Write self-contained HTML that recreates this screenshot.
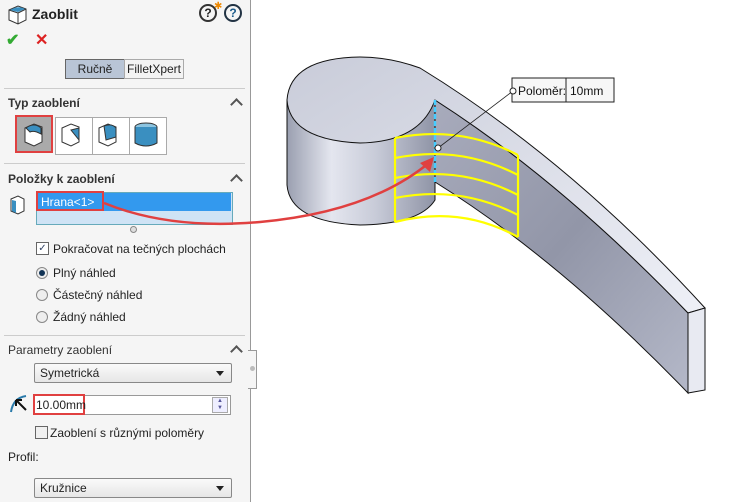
<!DOCTYPE html><html><head><meta charset="utf-8"><style>
body{margin:0;width:750px;height:502px;background:#fff;position:relative;overflow:hidden;font-family:"Liberation Sans",sans-serif;font-size:12px;color:#222}
.a{position:absolute}
#p{left:0;top:0;width:250px;height:502px;background:#f5f5f5;border-right:1px solid #999}
.sep{position:absolute;left:4px;width:241px;height:1px;background:#ccc}
.h{position:absolute;left:8px;font-size:12px;font-weight:bold;color:#333}
.car{position:absolute;left:232px;width:7px;height:7px;border-left:2px solid #555;border-top:2px solid #555;transform:rotate(45deg)}
.rb{position:absolute;left:36px;width:10px;height:10px;border:1px solid #888;border-radius:50%;background:#eee}
.dd{position:absolute;left:34px;width:196px;height:18px;border:1px solid #888;border-radius:2px;background:linear-gradient(#fafafa,#e6e6e6)}
.dd span{position:absolute;left:5px;top:2px}
.dd i{position:absolute;right:7px;top:7px;border:4px solid transparent;border-top:5px solid #222}
</style></head><body>
<div id="p" class="a"></div>
<div class="a" style="left:248px;top:350px;width:8px;height:37px;border:1px solid #999;border-left:none;background:#f5f5f5"></div>
<div class="a" style="left:250px;top:366px;width:5px;height:5px;border-radius:50%;background:#bbb"></div>
<svg class="a" style="left:6px;top:2px" width="24" height="24"><path d="M3 8 L12 4 L20 7 L20 18 L12 22 L3 18Z" fill="#fff" stroke="#333"/><path d="M3 8 L12 11 L12 22 M12 11 L20 7" fill="none" stroke="#333"/><path d="M4 8 Q12 3 19 7 L12 10Z" fill="#3a8fc0"/></svg>
<div class="a" style="left:32px;top:6px;font-size:14px;font-weight:bold">Zaoblit</div>
<div class="a" style="left:199px;top:4px;width:14px;height:14px;border:2px solid #333;border-radius:50%;font-weight:bold;text-align:center;line-height:14px;font-size:12px">?</div>
<div class="a" style="left:214px;top:1px;color:#e80;font-size:10px">✱</div>
<div class="a" style="left:224px;top:4px;width:14px;height:14px;border:2px solid #234;border-radius:50%;font-weight:bold;text-align:center;line-height:14px;font-size:12px;color:#1a5a8a">?</div>
<div class="a" style="left:6px;top:30px;color:#3a3;font-size:16px;font-weight:bold">✔</div>
<div class="a" style="left:35px;top:30px;color:#d22;font-size:16px;font-weight:bold">✕</div>
<div class="a" style="left:65px;top:59px;width:58px;height:18px;background:#b9c5d6;border:1px solid #666;text-align:center;line-height:18px">Ručně</div>
<div class="a" style="left:124px;top:59px;width:58px;height:18px;background:#f3f3f3;border:1px solid #aaa;text-align:center;line-height:18px">FilletXpert</div>
<div class="sep" style="top:88px"></div>
<div class="h" style="top:96px">Typ zaoblení</div><div class="car" style="top:100px"></div>
<div class="a" style="left:15px;top:115px;width:38px;height:38px;background:#aaa;border:2px solid #e04040;box-sizing:border-box"></div>
<div class="a" style="left:55px;top:117px;width:36px;height:36px;border:1px solid #aaa;background:#fff"></div>
<div class="a" style="left:92px;top:117px;width:36px;height:36px;border:1px solid #aaa;background:#fff"></div>
<div class="a" style="left:129px;top:117px;width:36px;height:36px;border:1px solid #aaa;background:#fff"></div>
<svg class="a" style="left:20px;top:120px" width="150" height="30">
<path d="M5 8 L14 4 L22 7 L22 22 L14 26 L5 22Z" fill="#fff" stroke="#333"/><path d="M6 8 Q14 2 21 8 L21 14 Q14 10 10 12Z" fill="#3a8fc0" stroke="#333"/>
<g transform="translate(37,0)"><path d="M5 8 L14 4 L22 7 L22 22 L14 26 L5 22Z" fill="#fff" stroke="#333"/><path d="M14 10 L22 8 L22 20 Z" fill="#3a8fc0" stroke="#333"/></g>
<g transform="translate(74,0)"><path d="M5 8 L14 4 L22 7 L22 22 L14 26 L5 22Z" fill="#fff" stroke="#333"/><path d="M10 6 Q18 3 22 8 L22 17 L12 20Z" fill="#3a8fc0" stroke="#333"/></g>
<g transform="translate(111,0)"><ellipse cx="15" cy="7" rx="11" ry="4" fill="#8cc4e0" stroke="#333"/><path d="M4 7 L4 23 Q15 29 26 23 L26 7" fill="#3a8fc0" stroke="#333"/></g>
</svg>
<div class="sep" style="top:163px"></div>
<div class="h" style="top:172px">Položky k zaoblení</div><div class="car" style="top:176px"></div>
<svg class="a" style="left:9px;top:195px" width="16" height="20"><path d="M2 4 L9 1 L15 4 L15 16 L9 19 L2 16Z" fill="#fff" stroke="#333"/><path d="M3 5 L7 6 L7 18 L3 16Z" fill="#3a8fc0"/></svg>
<div class="a" style="left:36px;top:192px;width:195px;height:31px;border:1px solid #6ab;background:#cfe3f5"></div>
<div class="a" style="left:37px;top:193px;width:194px;height:18px;background:#3399ee"></div>
<div class="a" style="left:36px;top:191px;width:68px;height:20px;border:2px solid #e04040;box-sizing:border-box"></div>
<div class="a" style="left:41px;top:195px;color:#fff;font-family:'Liberation Sans';font-size:12px">Hrana&lt;1&gt;</div>
<div class="a" style="left:130px;top:226px;width:5px;height:5px;border-radius:50%;border:1px solid #888;background:#ddd"></div>
<div class="a" style="left:36px;top:242px;width:11px;height:11px;border:1px solid #666;background:#fff;font-size:10px;line-height:11px;text-align:center;color:#346">✓</div>
<div class="a" style="left:53px;top:242px">Pokračovat na tečných plochách</div>
<div class="rb" style="top:267px"></div><div class="a" style="left:39px;top:270px;width:6px;height:6px;border-radius:50%;background:#135"></div>
<div class="a" style="left:53px;top:266px">Plný náhled</div>
<div class="rb" style="top:289px"></div><div class="a" style="left:53px;top:288px">Částečný náhled</div>
<div class="rb" style="top:311px"></div><div class="a" style="left:53px;top:310px">Žádný náhled</div>
<div class="sep" style="top:335px"></div>
<div class="h" style="top:343px;font-weight:normal">Parametry zaoblení</div><div class="car" style="top:347px"></div>
<div class="dd" style="top:363px"><span>Symetrická</span><i></i></div>
<svg class="a" style="left:8px;top:392px" width="24" height="24"><path d="M3 20 Q5 6 18 4" fill="none" stroke="#2a7aaa" stroke-width="2"/><path d="M18 18 L8 8 M8 8 L8 14 M8 8 L14 8" stroke="#111" stroke-width="2" fill="none"/></svg>
<div class="a" style="left:34px;top:395px;width:195px;height:18px;border:1px solid #999;background:#fff"></div>
<div class="a" style="left:212px;top:397px;width:14px;height:14px;border:1px solid #aaa;background:#eef;font-size:6px;line-height:7px;text-align:center;color:#559">▲<br>▼</div>
<div class="a" style="left:33px;top:394px;width:52px;height:21px;border:2px solid #e04040;box-sizing:border-box"></div>
<div class="a" style="left:36px;top:398px">10.00mm</div>
<div class="a" style="left:35px;top:426px;width:11px;height:11px;border:1px solid #666;background:#f0f0f0"></div>
<div class="a" style="left:50px;top:426px">Zaoblení s různými poloměry</div>
<div class="a" style="left:8px;top:450px">Profil:</div>
<div class="dd" style="top:478px"><span>Kružnice</span><i></i></div>
<svg class="a" style="left:0;top:0" width="750" height="502">
<defs><linearGradient id="cy" x1="0" x2="1"><stop offset="0" stop-color="#9a9fb0"/><stop offset=".3" stop-color="#e4e6ef"/><stop offset=".6" stop-color="#c8cbd8"/><stop offset="1" stop-color="#8f94a6"/></linearGradient>
<linearGradient id="tp" x1="0" y1="0" x2="1" y2="1"><stop offset="0" stop-color="#c9ccd9"/><stop offset="1" stop-color="#eef0f7"/></linearGradient>
<linearGradient id="fr" x1="0" y1="0" x2="1" y2="1"><stop offset="0" stop-color="#a8abbc"/><stop offset=".5" stop-color="#9296a8"/><stop offset="1" stop-color="#b4b8c8"/></linearGradient></defs>
<path d="M287 100 L287 185 Q290 222 360 225 Q420 224 435 200 L435 100Z" fill="url(#cy)" stroke="#111"/>
<path d="M435 100 Q560 180 688 313 L688 393 Q560 260 435 182Z" fill="url(#fr)" stroke="#111"/>
<path d="M287 100 Q290 58 360 57 Q390 57 420 68 Q570 160 705 308 L688 313 Q560 180 435 100 Q420 142 360 143 Q290 140 287 100Z" fill="url(#tp)" stroke="#111"/>
<path d="M688 313 L705 308 L705 390 L688 393Z" fill="#e8eaf2" stroke="#111"/>
<line x1="435" y1="100" x2="435" y2="182" stroke="#4cf" stroke-width="2.5" stroke-dasharray="5 2"/>
<g fill="none" stroke="#ff0" stroke-width="2.2">
<path d="M395 138 L395 222 M518 155 L518 237"/>
<path d="M395 138 Q460 125 518 155"/><path d="M395 158 Q460 145 518 175"/><path d="M395 178 Q460 165 518 195"/><path d="M395 198 Q460 185 518 215"/><path d="M395 222 Q460 205 518 237"/></g>
<line x1="513" y1="91" x2="438" y2="148" stroke="#222" stroke-width="0.8"/>
<circle cx="438" cy="148" r="3" fill="#fff" stroke="#222"/>
<rect x="512" y="78" width="102" height="24" fill="#f7f7f7" stroke="#222"/>
<line x1="566" y1="78" x2="566" y2="102" stroke="#222"/>
<circle cx="513" cy="91" r="3" fill="#fff" stroke="#222"/>
<text x="518" y="95" font-family="Liberation Sans" font-size="12" fill="#111">Poloměr:</text>
<text x="570" y="95" font-family="Liberation Sans" font-size="12" fill="#111">10mm</text>
<path d="M104 203 Q170 230 260 222 Q370 212 430 162" fill="none" stroke="#e04040" stroke-width="2.5"/>
<path d="M434 157 L420 163 L430 172Z" fill="#e04040"/>
</svg>
</body></html>
